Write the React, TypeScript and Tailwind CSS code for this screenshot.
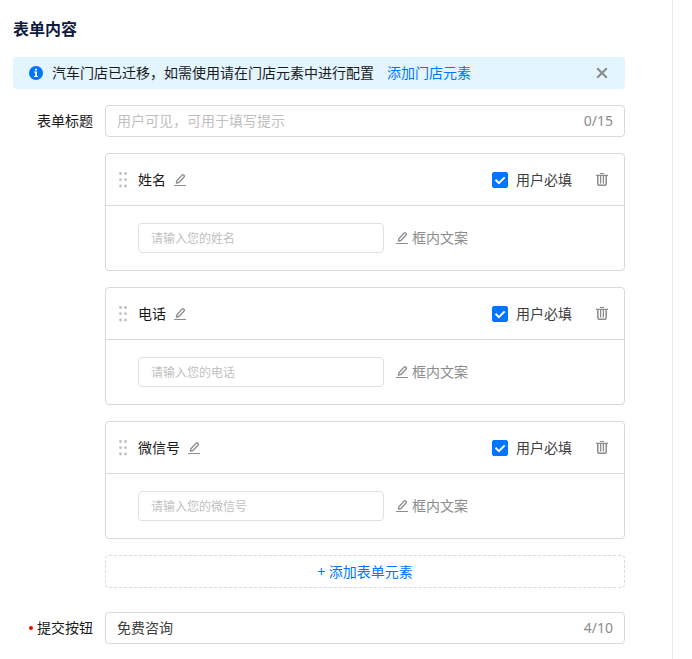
import { useState } from 'react';

interface FormField {
  id: string;
  label: string;
  placeholder: string;
  required: boolean;
}

const INITIAL_FIELDS: FormField[] = [
  { id: 'name', label: '姓名', placeholder: '请输入您的姓名', required: true },
  { id: 'phone', label: '电话', placeholder: '请输入您的电话', required: true },
  { id: 'wechat', label: '微信号', placeholder: '请输入您的微信号', required: true },
];

const InfoIcon = () => (
  <svg className="size-3.5 shrink-0" viewBox="0 0 14 14" aria-hidden="true">
    <circle cx="7" cy="7" r="7" fill="#0075ff" />
    <path d="M6 2.7h2v1.7H6zM5.2 5.6H8v4.3h1v1.2H5V9.9h1.2V6.8h-1z" fill="#fff" />
  </svg>
);

const CloseIcon = () => (
  <svg className="size-3" viewBox="0 0 12 12" fill="none" stroke="currentColor" strokeWidth="2.2" aria-hidden="true">
    <path d="M1.2 1.2l9.6 9.6M10.8 1.2l-9.6 9.6" />
  </svg>
);

const PencilIcon = () => (
  <svg className="size-3 shrink-0" viewBox="0 0 12 12" fill="none" stroke="currentColor" aria-hidden="true">
    <path d="M2.4 9.2l.5-2.5L8.1 1.1a1.1 1.1 0 0 1 1.5 0l.5.4a1.1 1.1 0 0 1 0 1.5L4.9 8.5z" strokeWidth="1.3" strokeLinejoin="round" />
    <path d="M0 11.5h12" />
  </svg>
);

const TrashIcon = () => (
  <svg className="h-[13px] w-3" viewBox="0 0 12 13" fill="none" stroke="currentColor" aria-hidden="true">
    <path d="M4 .5h4M0 2.4h12" strokeWidth="1.2" />
    <path d="M1.8 3v7.8q0 1.5 1.5 1.5h5.4q1.5 0 1.5-1.5V3" strokeWidth="1.5" />
    <path d="M4.6 3v7.4M7.4 3v7.4" strokeWidth="1.3" />
  </svg>
);

const DragIcon = () => (
  <svg className="h-4 w-2 shrink-0 text-[#bfbfbf]" viewBox="0 0 8 16" fill="currentColor" aria-hidden="true">
    {[1.5, 7.7, 14].map(y => (
      <g key={y}>
        <circle cx="1.5" cy={y} r="1.4" />
        <circle cx="6.5" cy={y} r="1.4" />
      </g>
    ))}
  </svg>
);

interface CountedInputProps {
  id: string;
  value: string;
  max: number;
  placeholder?: string;
  onChange: (value: string) => void;
}

const CountedInput = ({ id, value, max, placeholder, onChange }: CountedInputProps) => (
  <div className="flex h-8 flex-1 items-center rounded border border-[#d9d9d9] px-[11px]">
    <input
      id={id}
      type="text"
      className="h-5 min-w-0 flex-1 text-[#3d3d3d] outline-none placeholder:text-[#bfbfbf]"
      value={value}
      maxLength={max}
      placeholder={placeholder}
      onChange={e => onChange(e.target.value)}
    />
    <span className="text-[#8c8c8c]">{value.length}/{max}</span>
  </div>
);

interface FieldCardProps {
  field: FormField;
  onToggle: () => void;
  onRemove: () => void;
}

const FieldCard = ({ field, onToggle, onRemove }: FieldCardProps) => (
  <div className="rounded border border-[#d9d9d9]">
    <div className="flex h-[52px] items-center border-b border-[#d9d9d9] pr-4 pl-[13px]">
      <DragIcon />
      <span className="ml-[11px] text-[#1a1a1a]">{field.label}</span>
      <button type="button" aria-label="编辑" className="ml-2 text-[#8c8c8c]">
        <PencilIcon />
      </button>
      <label className="ml-auto flex items-center gap-2 text-[#3d3d3d]">
        <span className="grid">
          <input
            type="checkbox"
            className="peer col-start-1 row-start-1 size-4 appearance-none rounded-xs border border-[#d9d9d9] checked:border-[#0075ff] checked:bg-[#0075ff]"
            checked={field.required}
            onChange={onToggle}
          />
          <svg
            className="pointer-events-none invisible col-start-1 row-start-1 size-4 peer-checked:visible"
            viewBox="0 0 16 16"
            fill="none"
            stroke="#fff"
            strokeWidth="2"
            aria-hidden="true"
          >
            <path d="M3.5 7.8l3.4 3.4 5.8-5.8" />
          </svg>
        </span>
        用户必填
      </label>
      <button type="button" aria-label="删除" className="ml-6 text-[#8c8c8c]" onClick={onRemove}>
        <TrashIcon />
      </button>
    </div>
    <div className="flex items-center gap-3 px-8 py-[17px]">
      <input
        type="text"
        aria-label={field.placeholder}
        placeholder={field.placeholder}
        className="h-[30px] w-[246px] rounded border border-[#e0e0e0] px-3 text-xs outline-none placeholder:text-[#bfbfbf]"
      />
      <button type="button" className="flex items-center gap-1 text-[#8c8c8c]">
        <PencilIcon />
        框内文案
      </button>
    </div>
  </div>
);

const App = () => {
  const [title, setTitle] = useState('');
  const [submitText, setSubmitText] = useState('免费咨询');
  const [fields, setFields] = useState(INITIAL_FIELDS);
  const [showNotice, setShowNotice] = useState(true);

  const toggleRequired = (id: string) => {
    setFields(fields.map(f => (f.id === id ? { ...f, required: !f.required } : f)));
  };

  const removeField = (id: string) => {
    setFields(fields.filter(f => f.id !== id));
  };

  return (
    <div className="min-h-screen bg-white pr-[19px] font-['Noto_Sans','Noto_Sans_CJK_SC',sans-serif] text-sm leading-5">
      <form className="min-h-screen border-r border-[#ebebeb] pt-[17px] pr-[47px] pb-4 pl-[13px]">
        <h2 className="text-base leading-6 font-bold text-[#0f1a3d]">表单内容</h2>

        {showNotice && (
          <div className="mt-4 flex h-8 items-center rounded bg-[#e3f5ff] px-4 text-[#1a1a1a]">
            <InfoIcon />
            <span className="ml-[9px]">汽车门店已迁移，如需使用请在门店元素中进行配置</span>
            <a href="#store" className="ml-[13px] text-[#0075ff]">添加门店元素</a>
            <button type="button" aria-label="关闭" className="mr-px ml-auto text-[#8c8c8c]" onClick={() => setShowNotice(false)}>
              <CloseIcon />
            </button>
          </div>
        )}

        <div className="mt-4 flex items-center gap-3">
          <label htmlFor="form-title" className="w-20 text-right text-[#1a1a1a]">表单标题</label>
          <CountedInput id="form-title" value={title} max={15} placeholder="用户可见，可用于填写提示" onChange={setTitle} />
        </div>

        <div className="mt-4 ml-[92px] flex flex-col gap-4">
          {fields.map(field => (
            <FieldCard
              key={field.id}
              field={field}
              onToggle={() => toggleRequired(field.id)}
              onRemove={() => removeField(field.id)}
            />
          ))}
          <button type="button" className="h-[33px] rounded border border-dashed border-[#d9d9d9] text-[#0075ff]">
            + 添加表单元素
          </button>
        </div>

        <div className="mt-6 flex items-center gap-3">
          <label htmlFor="submit-text" className="flex w-20 items-center justify-end gap-1 text-[#1a1a1a]">
            <span className="size-1 rounded-full bg-[#ff0000]" />
            提交按钮
          </label>
          <CountedInput id="submit-text" value={submitText} max={10} onChange={setSubmitText} />
        </div>
      </form>
    </div>
  );
};

export default App;
